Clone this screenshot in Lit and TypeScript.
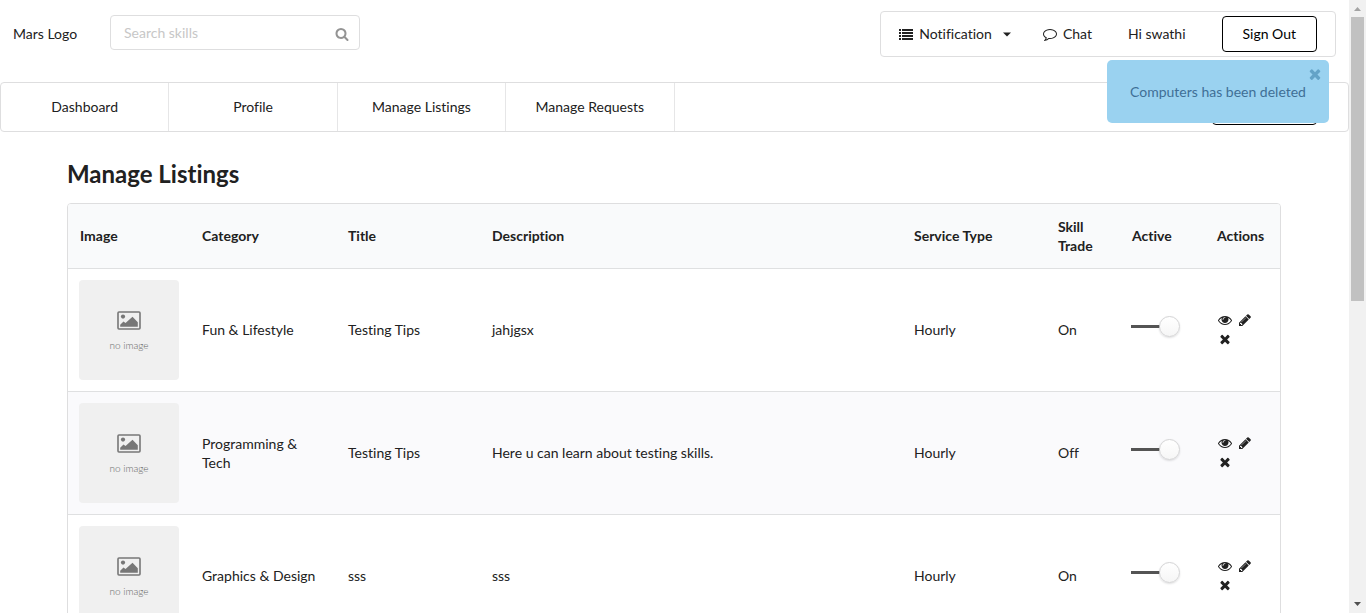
import { LitElement, html, css, svg } from "lit";
import { customElement, property, state } from "lit/decorators.js";

const paths: Record<string, string> = {
  search:
    "M1216 832q0-185-131.5-316.5t-316.5-131.5-316.5 131.5-131.5 316.5 131.5 316.5 316.5 131.5 316.5-131.5 131.5-316.5zm512 832q0 52-38 90t-90 38q-54 0-90-38l-343-342q-179 124-399 124-143 0-273.5-55.5t-225-150-150-225-55.5-273.5 55.5-273.5 150-225 225-150 273.5-55.5 273.5 55.5 225 150 150 225 55.5 273.5q0 220-124 399l343 343q37 37 37 90z",
  eye:
    "M1664 960q-152-236-381-353 61 104 61 225 0 185-131.5 316.5t-316.5 131.5-316.5-131.5-131.5-316.5q0-121 61-225-229 117-381 353 133 205 333.5 326.5t434.5 121.5 434.5-121.5 333.5-326.5zm-720-384q0-20-14-34t-34-14q-125 0-214.5 89.5t-89.5 214.5q0 20 14 34t34 14 34-14 14-34q0-86 61-147t147-61q20 0 34-14t14-34zm848 384q0 34-20 69-140 230-376.5 368.5t-499.5 138.5-499.5-139-376.5-368q-20-35-20-69t20-69q140-229 376.5-368t499.5-139 499.5 139 376.5 368q20 35 20 69z",
  pencil:
    "M491 1536l91-91-235-235-91 91v107h128v128h107zm523-928q0-22-22-22-10 0-17 7l-542 542q-7 7-7 17 0 22 22 22 10 0 17-7l542-542q7-7 7-17zm-54-192l416 416-832 832h-416v-416zm683 96q0 53-37 90l-166 166-416-416 166-165q36-38 90-38 53 0 91 38l235 234q37 39 37 91z",
  remove:
    "M1490 1322q0 40-28 68l-136 136q-28 28-68 28t-68-28l-294-294-294 294q-28 28-68 28t-68-28l-136-136q-28-28-28-68t28-68l294-294-294-294q-28-28-28-68t28-68l136-136q28-28 68-28t68 28l294 294 294-294q28-28 68-28t68 28l136 136q28 28 28 68t-28 68l-294 294 294 294q28 28 28 68z",
  comment:
    "M896 384q-204 0-381.5 69.5t-282 187.5-104.5 255q0 112 71.5 213.5t201.5 175.5l87 50-27 96q-24 91-70 172 152-63 275-171l43-38 57 6q69 8 130 8 204 0 381.5-69.5t282-187.5 104.5-255-104.5-255-282-187.5-381.5-69.5zm896 512q0 174-120 321.5t-326 233-450 85.5q-70 0-145-8-198 175-460 242-49 14-114 22h-5q-15 0-27-10.5t-16-27.5v-1q-3-4-.5-12t2-10 4.5-9.5l6-9 7-8.5 8-9q7-8 31-34.5t34.5-38 31-39.5 32.5-51 27-59 26-76q-157-89-247.5-220t-90.5-281q0-174 120-321.5t326-233 450-85.5 450 85.5 326 233 120 321.5z",
  list:
    "M0 256h256v256H0zM0 640h256v256H0zM0 1024h256v256H0zM0 1408h256v256H0zM384 256h1408v256H384zM384 640h1408v256H384zM384 1024h1408v256H384zM384 1408h1408v256H384z",
  caret: "M384 704h1024l-512 512z",
};

@customElement("ui-icon")
export class UiIcon extends LitElement {
  @property() name = "";

  static styles = css`
    :host {
      display: inline-flex;
      width: 14px;
      height: 14px;
      flex: none;
    }
    .glyph {
      width: 100%;
      height: 100%;
      fill: currentColor;
    }
  `;

  render() {
    return html`<svg class="glyph" viewBox="0 0 1792 1792" aria-hidden="true">
      ${svg`<path d=${paths[this.name] ?? ""}></path>`}
    </svg>`;
  }
}

interface Listing {
  category: string;
  title: string;
  description: string;
  service: string;
  trade: string;
  active: boolean;
}

@customElement("app-root")
export class AppRoot extends LitElement {
  @state() private toastOpen = true;

  private tabs = ["Dashboard", "Profile", "Manage Listings", "Manage Requests"];

  private listings: Listing[] = [
    { category: "Fun & Lifestyle", title: "Testing Tips", description: "jahjgsx", service: "Hourly", trade: "On", active: true },
    { category: "Programming & Tech", title: "Testing Tips", description: "Here u can learn about testing skills.", service: "Hourly", trade: "Off", active: true },
    { category: "Graphics & Design", title: "sss", description: "sss", service: "Hourly", trade: "On", active: true },
  ];

  static styles = css`
    :host {
      display: flex;
      height: 100vh;
      overflow: hidden;
      position: relative;
      background: #fff;
      color: #212121;
      font: 14px/20px Lato, "Liberation Sans", sans-serif;
      font-variant-ligatures: none;
    }
    *,
    *::after {
      box-sizing: border-box;
    }
    button,
    input {
      font: inherit;
      font-variant-ligatures: none;
      color: inherit;
      margin: 0;
    }
    button {
      background: none;
      border: 0;
      padding: 0;
      cursor: pointer;
    }
    a {
      color: inherit;
      text-decoration: none;
    }
    .page {
      flex: 1;
      min-width: 0;
    }
    .top {
      display: flex;
      align-items: center;
      padding: 11px 13px 25px;
    }
    .logo {
      width: 97px;
    }
    .search {
      display: flex;
      align-items: center;
      width: 250px;
      height: 35px;
      margin-bottom: 3px;
      padding: 0 10px 0 13px;
      border: 1px solid #dededf;
      border-radius: 4px;
    }
    .search-input {
      flex: 1;
      min-width: 0;
      border: 0;
      outline: 0;
      padding: 0;
      background: none;
    }
    .search-input::placeholder {
      color: #c7c7c7;
    }
    .search ui-icon {
      color: #949494;
      margin-top: 2px;
    }
    .user-menu {
      display: flex;
      align-items: center;
      gap: 36px;
      height: 46px;
      margin-left: auto;
      padding: 0 18px;
      border: 1px solid #dededf;
      border-radius: 4px;
    }
    .menu-item {
      display: flex;
      align-items: center;
      gap: 6px;
    }
    .menu-item .caret {
      margin: 0 -7px 0 2px;
    }
    .sign-out {
      height: 36px;
      padding: 0 20px;
      border: 1px solid #000;
      border-radius: 4px;
      color: #000;
    }
    .tabs {
      display: flex;
      height: 50px;
      border: 1px solid #dededf;
      border-radius: 4px;
    }
    .tab {
      display: flex;
      align-items: center;
      justify-content: center;
      width: 12.5%;
      border-right: 1px solid #e6e6e7;
    }
    .tabs .sign-out {
      margin: 6px 31px 0 auto;
      padding: 0 25px;
    }
    .content {
      padding: 28px 68px 0 67px;
    }
    .title {
      margin: 0 0 15px;
      font-size: 24px;
      line-height: 28px;
      font-weight: 700;
    }
    .listings {
      width: 100%;
      table-layout: fixed;
      border: 1px solid #dededf;
      border-radius: 4px;
      border-collapse: separate;
      border-spacing: 0;
      overflow: hidden;
      line-height: 19px;
    }
    .listings th {
      height: 64px;
      padding: 0 11px 1px 12px;
      background: #f9fafb;
      text-align: left;
      font-weight: 700;
    }
    .listings td {
      padding: 11px 11px 12px 12px;
      border-top: 1px solid #dfe0e1;
    }
    .listings .control-cell {
      padding: 11px;
    }
    .listings tr:nth-child(even) td {
      background: #fafafc;
    }
    .c-image {
      width: 122px;
    }
    .c-category {
      width: 146px;
    }
    .c-wide {
      width: 144px;
    }
    .c-trade {
      width: 74px;
    }
    .c-active {
      width: 85px;
    }
    .c-actions {
      width: 75px;
    }
    .listings .th-last {
      padding-right: 0;
    }
    .thumb {
      display: flex;
      flex-direction: column;
      align-items: center;
      justify-content: center;
      gap: 8px;
      width: 100px;
      height: 100px;
      border-radius: 4px;
      background: #f0f0f0;
      color: #666;
      font-size: 10px;
      line-height: 14px;
      font-weight: 300;
    }
    .picture {
      width: 24px;
      height: 19px;
      margin-top: 3px;
    }
    .toggle {
      appearance: none;
      display: block;
      width: 49px;
      height: 21px;
      margin-bottom: 8px;
      background: linear-gradient(#545454, #545454) 0 center / 30px 3px no-repeat;
    }
    .toggle::after {
      content: "";
      display: block;
      width: 21px;
      height: 21px;
      margin-left: 28px;
      border: 1px solid #d4d4d5;
      border-radius: 50%;
      background: linear-gradient(#fff, #f6f6f6);
      box-shadow: 0 1px 2px rgba(34, 36, 38, 0.15);
    }
    .actions {
      display: flex;
      flex-wrap: wrap;
      column-gap: 4px;
    }
    .action {
      display: flex;
      align-items: center;
      justify-content: center;
      width: 16px;
      height: 19px;
    }
    .toast {
      position: absolute;
      top: 60px;
      right: 37px;
      width: 222px;
      height: 63px;
      padding: 22px 0;
      border-radius: 5px;
      background: #9ad2f0;
      color: #3f6f96;
      text-align: center;
    }
    .toast-close {
      position: absolute;
      top: 6px;
      right: 6px;
      display: flex;
      color: #64a3c7;
    }
    .toast-close ui-icon {
      width: 16px;
      height: 16px;
    }
    .scrollbar {
      display: flex;
      flex-direction: column;
      align-items: center;
      width: 17px;
      background: #f1f1f1;
    }
    .arrow {
      width: 17px;
      height: 17px;
      fill: #505050;
    }
    .arrow-up {
      fill: #a3a3a3;
    }
    .track {
      flex: 1;
      width: 13px;
    }
    .handle {
      height: 49%;
      background: #c1c1c1;
    }
  `;

  private renderRow(item: Listing) {
    return html`<tr>
      <td class="control-cell">
        <div class="thumb">
          <svg class="picture" viewBox="0 0 24 19" aria-hidden="true">
            <rect x="1" y="1" width="22" height="17" rx="1" fill="none" stroke="#777" stroke-width="1.6"></rect>
            <circle cx="6" cy="5.6" r="2.1" fill="#777"></circle>
            <path d="M3.2 15.800v-2l3.300-3.300 2 1.500 7-6.200 5.300 5.500v4.500z" fill="#777"></path>
          </svg>
          <span>no image</span>
        </div>
      </td>
      <td>${item.category}</td>
      <td>${item.title}</td>
      <td>${item.description}</td>
      <td>${item.service}</td>
      <td>${item.trade}</td>
      <td class="control-cell"><input class="toggle" type="checkbox" aria-label="Active" .checked=${item.active} /></td>
      <td>
        <div class="actions">
          <button class="action" aria-label="View"><ui-icon name="eye"></ui-icon></button>
          <button class="action" aria-label="Edit"><ui-icon name="pencil"></ui-icon></button>
          <button class="action" aria-label="Delete"><ui-icon name="remove"></ui-icon></button>
        </div>
      </td>
    </tr>`;
  }

  render() {
    return html`
      <div class="page">
        <header class="top">
          <a class="logo" href="#">Mars Logo</a>
          <label class="search">
            <input class="search-input" type="text" placeholder="Search skills" aria-label="Search skills" />
            <ui-icon name="search"></ui-icon>
          </label>
          <div class="user-menu">
            <button class="menu-item">
              <ui-icon name="list"></ui-icon>Notification<ui-icon class="caret" name="caret"></ui-icon>
            </button>
            <a class="menu-item" href="#"><ui-icon name="comment"></ui-icon>Chat</a>
            <span>Hi swathi</span>
            <button class="sign-out">Sign Out</button>
          </div>
        </header>
        <nav class="tabs">
          ${this.tabs.map((tab) => html`<a class="tab" href="#">${tab}</a>`)}
          <button class="sign-out">Sign Out</button>
        </nav>
        <main class="content">
          <h2 class="title">Manage Listings</h2>
          <table class="listings">
            <colgroup>
              <col class="c-image" />
              <col class="c-category" />
              <col class="c-wide" />
              <col />
              <col class="c-wide" />
              <col class="c-trade" />
              <col class="c-active" />
              <col class="c-actions" />
            </colgroup>
            <thead>
              <tr>
                <th>Image</th>
                <th>Category</th>
                <th>Title</th>
                <th>Description</th>
                <th>Service Type</th>
                <th>Skill Trade</th>
                <th>Active</th>
                <th class="th-last">Actions</th>
              </tr>
            </thead>
            <tbody>
              ${this.listings.map((item) => this.renderRow(item))}
            </tbody>
          </table>
        </main>
      </div>
      <div class="scrollbar" aria-hidden="true">
        <svg class="arrow arrow-up" viewBox="0 0 17 17"><path d="M5 11h7l-3.500-4z"></path></svg>
        <div class="track"><div class="handle"></div></div>
        <svg class="arrow" viewBox="0 0 17 17"><path d="M5 6h7l-3.500 4z"></path></svg>
      </div>
      ${this.toastOpen
        ? html`<div class="toast" role="status">
            Computers has been deleted
            <button class="toast-close" aria-label="Close" @click=${() => (this.toastOpen = false)}>
              <ui-icon name="remove"></ui-icon>
            </button>
          </div>`
        : null}
    `;
  }
}
